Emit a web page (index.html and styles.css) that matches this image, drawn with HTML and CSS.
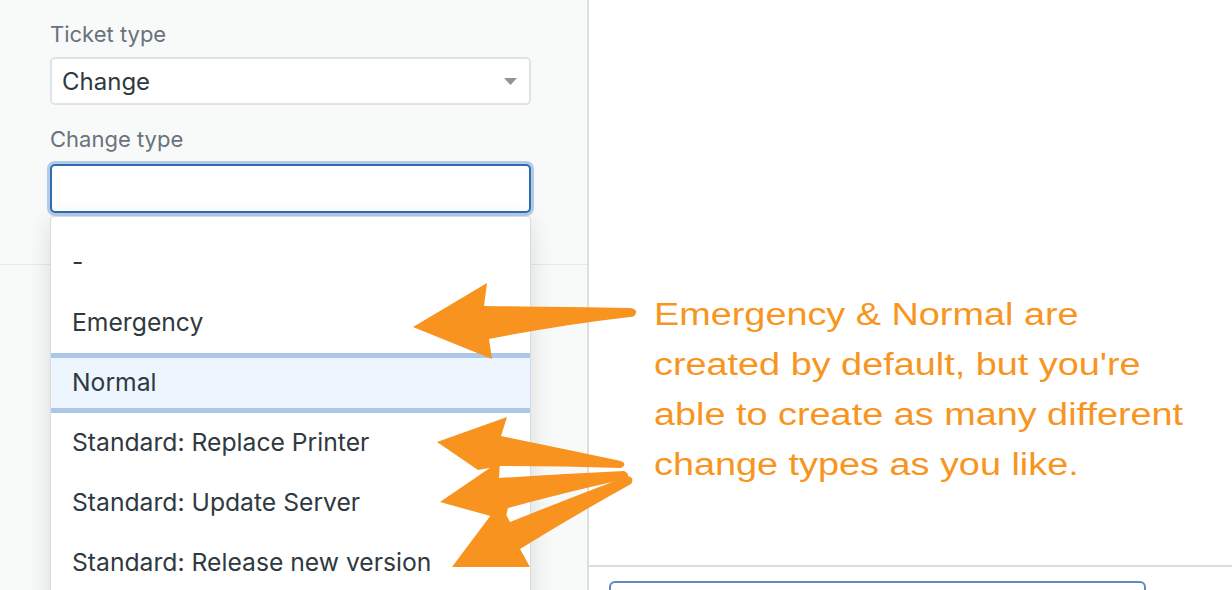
FILE: index.html
```html
<!DOCTYPE html>
<html lang="en">
<head>
    <meta charset="utf-8" />
    <title>Change type</title>
    <link rel="stylesheet" href="styles.css">
</head>
<body>
    <div class="page">
        <aside class="sidebar">
            <div class="form-section">
                <label class="field-label">Ticket type</label>
                <div class="select">
                    <span>Change</span>
                    <svg class="caret" width="13" height="7" viewBox="0 0 13 7"><path d="M0 0h13L6.5 7z" /></svg>
                </div>
                <label class="field-label second">Change type</label>
                <div class="combo">
                    <div class="combo-input"></div>
                    <ul class="menu">
                        <li>-</li>
                        <li>Emergency</li>
                        <li class="active">Normal</li>
                        <li>Standard: Replace Printer</li>
                        <li>Standard: Update Server</li>
                        <li>Standard: Release new version</li>
                    </ul>
                </div>
            </div>
        </aside>
        <main class="content">
            <div class="content-top"></div>
            <div class="content-row">
                <div class="text-box"></div>
            </div>
        </main>

        <!-- annotation layer -->
        <svg class="arrows" width="1232" height="590" viewBox="0 0 1232 590">
            <path d="M413 327 L487 283 L484 306 Q560 307 630 308 Q637 309 636 313 Q635 317 630 317 Q560 325 489 339 L492 359 Z" />
            <path d="M437 442 L507 417 L501 436 Q560 448 621 461 Q628 464 621 468 Q560 466 500 466 L478 470 Z" />
            <path d="M440 502 L500 461 L499 478 Q560 474 624 471 Q631 474 626 479 Q570 491 508 508 L505 520 Z" />
            <path d="M452 567 L500 503 L510 522 Q570 498 628 476 Q635 478 631 484 Q575 515 520 549 L530 567 Z" />
        </svg>
        <p class="note">Emergency &amp; Normal are<br>created by default, but you're<br>able to create as many different<br>change types as you like.</p>
    </div>
</body>
</html>
```

FILE: styles.css
```css
body {
    margin: 0;
    font-family: Inter, "Liberation Sans", sans-serif;
    overflow: hidden;
}
.page {
    position: relative;
    display: flex;
    height: 590px;
    overflow: hidden;
}
.sidebar {
    flex: none;
    width: 587px;
    background-color: #f8f9f9;
    border-right: 2px solid #dcdfe1;
}
.form-section {
    box-sizing: border-box;
    height: 265px;
    padding: 22px 56px 0 50px;
    border-bottom: 1px solid #e4e6e8;
}
.field-label {
    display: block;
    font-size: 22px;
    line-height: 25px;
    color: #68737d;
}
.field-label.second {
    margin-top: 22px;
}
.select {
    box-sizing: border-box;
    display: flex;
    align-items: center;
    justify-content: space-between;
    height: 48px;
    margin-top: 10px;
    padding: 0 12px 0 10px;
    background-color: white;
    border: 2px solid #e0e3e5;
    border-radius: 5px;
    font-size: 24px;
    color: #2f3941;
}
.caret {
    fill: #8c959e;
}
.combo {
    position: relative;
    margin-top: 12px;
}
.combo-input {
    box-sizing: border-box;
    height: 49px;
    background-color: white;
    border: 2px solid #2f6cb0;
    border-radius: 5px;
    box-shadow: 0 0 0 3px #b3cce6;
}
.menu {
    position: absolute;
    top: 52px;
    left: 0;
    width: 481px;
    height: 400px;
    box-sizing: border-box;
    margin: 0;
    padding: 16px 0 0;
    list-style: none;
    background-color: white;
    border: 1px solid #d8dcde;
    border-radius: 4px;
    box-shadow: 0 6px 24px rgba(0, 0, 0, 0.12);
}
.menu li {
    height: 60px;
    line-height: 58px;
    padding-left: 21px;
    font-size: 24.7px;
    color: #2f3941;
}
.menu li.active {
    background-color: #edf6fe;
    box-shadow: inset 0 5px #adc8e6, inset 0 -5px #adc8e6;
}
.content {
    flex: 1;
    display: flex;
    flex-direction: column;
    background-color: white;
}
.content-top {
    flex: none;
    height: 565px;
    border-bottom: 2px solid #dcdcdc;
}
.content-row {
    flex: none;
    padding: 14px 0 0 20px;
}
.text-box {
    box-sizing: border-box;
    width: 537px;
    height: 40px;
    border: 2px solid #5d8bc0;
    border-radius: 6px;
}
.arrows {
    position: absolute;
    top: 0;
    left: 0;
    fill: #f7931e;
    pointer-events: none;
}
.note {
    position: absolute;
    top: 290px;
    left: 654px;
    margin: 0;
    font-family: "Liberation Sans", Arial, sans-serif;
    font-size: 31px;
    line-height: 50px;
    color: #f7951f;
    white-space: nowrap;
    transform: scaleX(1.22);
    transform-origin: left top;
}
```
